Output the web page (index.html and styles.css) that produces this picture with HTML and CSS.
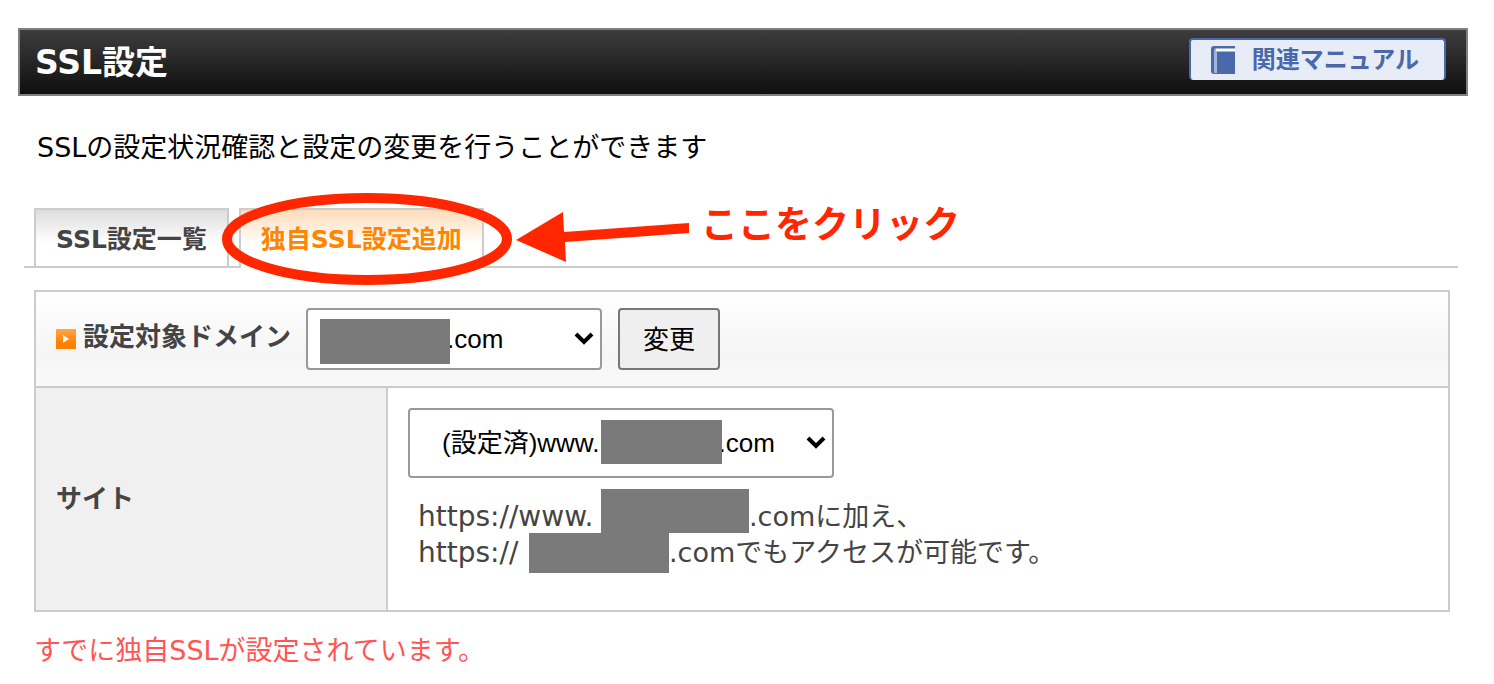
FILE: index.html
```html
<!DOCTYPE html>
<html lang="ja">
<head>
    <meta charset="UTF-8">
    <meta name="viewport" content="width=device-width, initial-scale=1.0">
    <title>SSL設定</title>
    <link rel="stylesheet" href="styles.css">
</head>
<body>
<div class="container">
    <header class="title-bar">
        <h1>SSL設定</h1>
        <a class="manual-link" href="#">
            <svg class="book-icon" width="24" height="28" viewBox="0 0 24 28" aria-hidden="true">
                <path d="M3 0H24V28H3Q0 28 0 25V3Q0 0 3 0Z" fill="#4969aa"/>
                <path d="M3 27V5Q3 2 6 2H24V6H6V27Z" fill="#a5b4d7"/>
                <path d="M5 3H24V5H5Z" fill="#fff"/>
            </svg>
            関連マニュアル
        </a>
    </header>

    <p class="lead">SSLの設定状況確認と設定の変更を行うことができます</p>

    <nav class="tabs">
        <a class="tab" href="#">SSL設定一覧</a>
        <a class="tab active" href="#">独自SSL設定追加</a>
        <svg class="marker" width="470" height="94" viewBox="0 0 470 94" aria-hidden="true">
            <ellipse cx="146" cy="47" rx="140" ry="41" fill="none" stroke="#ff2600" stroke-width="10"/>
            <path d="M295 48L342 20L343 40L468 31V41L344 50L345 70Z" fill="#ff2600"/>
        </svg>
        <span class="marker-text">ここをクリック</span>
    </nav>

    <main class="content">
        <table class="settings">
            <tr>
                <td class="domain" colspan="2">
                    <div class="domain-row">
                        <svg class="bullet" width="20" height="20" viewBox="0 0 20 20" aria-hidden="true">
                            <defs>
                                <linearGradient id="orange" x1="0" y1="0" x2="0" y2="1">
                                    <stop offset="0" stop-color="#ffa64d"/>
                                    <stop offset="0.7" stop-color="#ff8000"/>
                                </linearGradient>
                            </defs>
                            <rect width="20" height="20" fill="url(#orange)"/>
                            <path d="M7 6L13 10L7 14Z" fill="#fff2e0"/>
                        </svg>
                        <label for="domain">設定対象ドメイン</label>
                        <div class="select-box domain-select">
                            <select id="domain">
                                <option>.com</option>
                            </select>
                            <span class="mask"></span>
                            <svg class="arrow" width="20" height="14" viewBox="0 0 20 14" aria-hidden="true"><path d="M2 2L10 10L18 2" fill="none" stroke="#000" stroke-width="4"/></svg>
                        </div>
                        <button type="button">変更</button>
                    </div>
                </td>
            </tr>
            <tr>
                <th><label for="site">サイト</label></th>
                <td class="site">
                    <div class="select-box site-select">
                        <select id="site">
                            <option>(設定済)www.&emsp;&emsp;&emsp;&emsp;&ensp;&hairsp;.com</option>
                        </select>
                        <span class="mask"></span>
                        <svg class="arrow" width="20" height="14" viewBox="0 0 20 14" aria-hidden="true"><path d="M2 2L10 10L18 2" fill="none" stroke="#000" stroke-width="4"/></svg>
                    </div>
                    <div class="note">
                        <p><span class="url">https://www.</span><span class="mask mask-www"></span>.comに加え、</p>
                        <p><span class="url url-root">https://</span><span class="mask mask-root"></span>.comでもアクセスが可能です。</p>
                    </div>
                </td>
            </tr>
        </table>

        <p class="error">すでに独自SSLが設定されています。</p>
    </main>
</div>
</body>
</html>
```

FILE: styles.css
```css
* {
    box-sizing: border-box;
}

body {
    margin: 0;
    background: #fff;
    color: #444;
    font-family: "DejaVu Sans", "Noto Sans CJK JP", sans-serif;
    font-size: 27px;
    line-height: 36px;
}

h1, p {
    margin: 0;
}

a {
    text-decoration: none;
}

.container {
    padding: 28px 26px 16px 18px;
}

.title-bar {
    display: flex;
    justify-content: space-between;
    align-items: flex-start;
    padding: 8px 20px 14px 15px;
    border: 2px solid #808080;
    background: linear-gradient(#3d3d3d, #0f0f0f);
}

h1 {
    color: #fff;
    font-size: 33px;
    line-height: 42px;
    padding-top: 4px;
    margin-bottom: -4px;
}

.manual-link {
    display: flex;
    align-items: center;
    gap: 17px;
    height: 42px;
    padding: 0 25px 0 20px;
    border: 2px solid #4969aa;
    border-bottom: 0;
    border-radius: 4px;
    background: #e8ecf7;
    color: #4969aa;
    font-size: 24px;
    font-weight: bold;
}

.lead {
    padding: 34px 19px 42px;
    color: #000;
}

/* tabs */
.tabs {
    position: relative;
    display: flex;
    gap: 10px;
    margin: 0 10px 0 6px;
    padding: 0 10px;
    border-bottom: 2px solid #ccc;
}

.tab {
    padding: 12px 20px 8px;
    border: 2px solid #ccc;
    border-bottom: 0;
    background: linear-gradient(#ddd, #fff 60%);
    color: #444;
    font-size: 25px;
    font-weight: bold;
}

.tab.active {
    margin-bottom: -2px;
    background: linear-gradient(#ffdcb8, #fff 60%);
    color: #ff8400;
}

.marker {
    position: absolute;
    left: 197px;
    top: -16px;
}

.marker-text {
    position: absolute;
    left: 677px;
    top: 0;
    color: #ff2600;
    font-size: 37px;
    font-weight: 600;
}

/* settings table */
.content {
    padding: 22px 18px 0 16px;
}

.settings {
    width: 100%;
    border-collapse: collapse;
}

.settings th,
.settings td {
    border: 2px solid #ccc;
    text-align: left;
}

.settings th {
    width: 352px;
    padding: 0 20px;
    background: #f0f0f0;
    font-size: 26px;
}

.settings .domain {
    padding: 16px 20px;
    background: linear-gradient(#fff, #f5f5f5 65%, #f9f9f9);
}

.domain-row {
    display: flex;
    align-items: center;
}

.domain-row label {
    width: 216px;
    padding-bottom: 4px;
    font-size: 26px;
    font-weight: bold;
}

.bullet {
    margin-right: 7px;
}

.domain-select {
    width: 296px;
    margin: 0 16px 0 7px;
}

select,
button {
    border: 2px solid #999;
    border-radius: 4px;
    background: #fff;
    color: #000;
    font-family: "Liberation Sans", "Noto Sans CJK JP", sans-serif;
    font-size: 26px;
}

button {
    width: 102px;
    height: 62px;
    padding: 0 0 4px;
    border-color: #777;
    background: #efefef;
}

.select-box {
    position: relative;
}

.select-box select {
    appearance: none;
    display: block;
    width: 100%;
    height: 62px;
    padding: 0 40px 0 139px;
}

.select-box .arrow {
    position: absolute;
    right: 8px;
    top: 50%;
    margin-top: -7px;
    pointer-events: none;
}

.mask {
    background: #7a7a7a;
}

.select-box .mask {
    position: absolute;
    left: 14px;
    top: 11px;
    width: 130px;
    height: 45px;
    pointer-events: none;
}

.settings .site {
    padding: 20px 20px 39px;
}

.site-select {
    width: 426px;
}

.site-select select {
    height: 70px;
    padding: 0 40px 0 32px;
}

.site-select .mask {
    left: 193px;
    top: 12px;
    width: 121px;
    height: 44px;
}

.note {
    padding: 21px 0 0 10px;
}

.note p {
    display: flex;
}

.url {
    width: 183px;
    font-size: 28px;
}

.url-root {
    width: 111px;
}

.mask-www {
    width: 148px;
    margin: -10px 0 2px;
}

.mask-root {
    width: 140px;
    margin: -2px 0;
}

.error {
    padding-top: 21px;
    color: #ff5555;
}
```
